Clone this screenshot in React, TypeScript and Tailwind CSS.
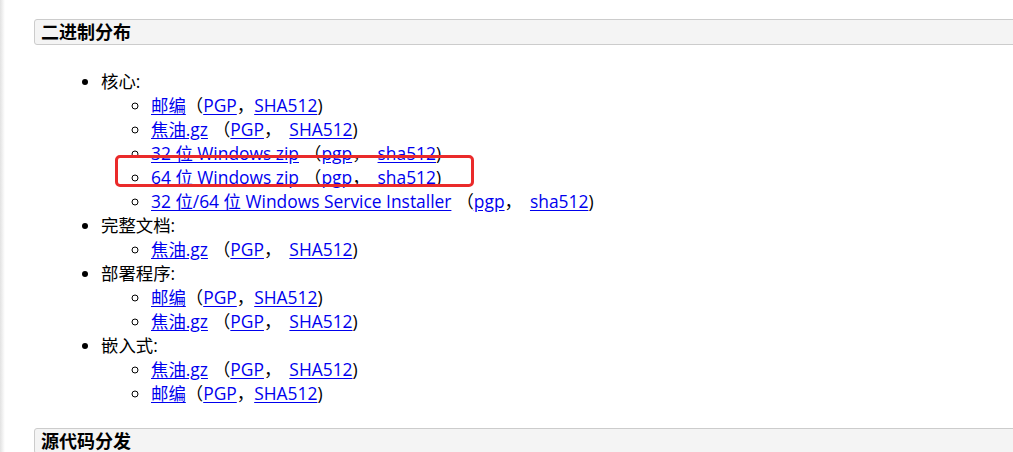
import React from "react";

function Link({ children }: { children: React.ReactNode }) {
  return (
    <a href="#" className="text-[#0000ee] underline underline-offset-[2px]">
      {children}
    </a>
  );
}

function Entry({ name, wide, lower }: { name: string; wide?: boolean; lower?: boolean }) {
  return (
    <li className="list-[circle]">
      <Link>{name}</Link>
      {wide ? <span className="inline-block w-[5px]" /> : <span className="inline-block w-[0px]" />}
      <span>（</span>
      <Link>{lower ? "pgp" : "PGP"}</Link>
      <span>，</span>
      {wide && <span className="inline-block w-[8px]" />}
      <Link>{lower ? "sha512" : "SHA512"}</Link>
      <span>)</span>
    </li>
  );
}

function Heading({ children }: { children: React.ReactNode }) {
  return (
    <h2 className="-mr-4 h-[26px] rounded-l-[3px] border border-[#cccccc] bg-[#f4f4f4] pl-[6px] text-[18px] font-bold leading-[24px] text-black">
      {children}
    </h2>
  );
}

export default function App() {
  return (
    <div
      className="flex h-[452px] w-[1013px] overflow-hidden bg-white text-black"
      style={{ fontFamily: '"Open Sans", "Noto Sans CJK SC", sans-serif' }}
    >
      <div className="w-[5px] shrink-0 bg-gradient-to-r from-[#e2e2e2] to-white" />
      <div className="relative flex-1 pl-[29px] pt-[19px]">
        <Heading>二进制分布</Heading>
        <ul className="mt-[24px] list-disc pl-[67px] text-[17.4px] leading-[24px]">
          <li>
            核心:
            <ul className="pl-[50px]">
              <Entry name="邮编" />
              <Entry name="焦油.gz" wide />
              <Entry name="32 位 Windows zip" wide lower />
              <Entry name="64 位 Windows zip" wide lower />
              <Entry name="32 位/64 位 Windows Service Installer" wide lower />
            </ul>
          </li>
          <li>
            完整文档:
            <ul className="pl-[50px]">
              <Entry name="焦油.gz" wide />
            </ul>
          </li>
          <li>
            部署程序:
            <ul className="pl-[50px]">
              <Entry name="邮编" />
              <Entry name="焦油.gz" wide />
            </ul>
          </li>
          <li>
            嵌入式:
            <ul className="pl-[50px]">
              <Entry name="焦油.gz" wide />
              <Entry name="邮编" />
            </ul>
          </li>
        </ul>
        <div className="mt-[23px]">
          <Heading>源代码分发</Heading>
        </div>
        <div className="pointer-events-none absolute left-[110px] top-[155px] h-[32px] w-[359px] rounded-[5px] border-[3px] border-[#ea2a2a]" />
      </div>
    </div>
  );
}
